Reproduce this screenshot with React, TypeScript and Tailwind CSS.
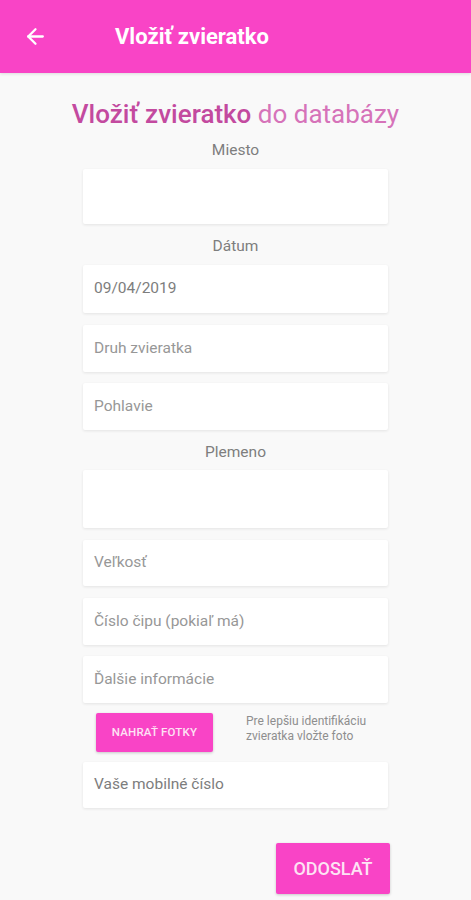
import { ArrowLeft } from "lucide-react";

// Simple white field box with optional placeholder text
function Field({ text, h, mt, dark }: { text?: string; h: string; mt: string; dark?: boolean }) {
  return (
    <div
      className={`${h} ${mt} w-full bg-white rounded-[2px] shadow-[0_1px_3px_rgba(0,0,0,0.09)] flex items-center px-[11px] text-[15.5px] ${
        dark ? "text-[#7d7d7d]" : "text-[#979797]"
      }`}
    >
      {text}
    </div>
  );
}

function Label({ text, mt }: { text: string; mt: string }) {
  return <div className={`${mt} text-center text-[15.5px] leading-[20px] text-[#7e7e7e]`}>{text}</div>;
}

export default function App() {
  return (
    <div className="w-[471px] h-[900px] bg-[#f9f9f9] overflow-hidden" style={{ fontFamily: "Roboto, 'Noto Sans', sans-serif" }}>
      {/* HEADER */}
      <div className="h-[73px] bg-[#f944c6] flex items-center shadow-[0_1px_3px_rgba(0,0,0,0.12)]">
        <ArrowLeft className="ml-[23px] w-[25px] h-[25px] text-white" strokeWidth={2.2} />
        <div className="ml-[67px] text-white text-[22px] font-bold">Vložiť zvieratko</div>
      </div>

      {/* FORM */}
      <div className="w-[305px] mx-auto">
        <div className="mt-[26px] text-center text-[26px] leading-[30px] whitespace-nowrap -mx-[30px]">
          <span className="text-[#c34a9f] font-medium">Vložiť zvieratko</span>{" "}
          <span className="text-[#d673b9]">do databázy</span>
        </div>

        <Label text="Miesto" mt="mt-[11px]" />
        <Field h="h-[55px]" mt="mt-[9px]" />
        <Label text="Dátum" mt="mt-[12px]" />
        <Field text="09/04/2019" h="h-[48px]" mt="mt-[9px]" dark />
        <Field text="Druh zvieratka" h="h-[47px]" mt="mt-[12px]" />
        <Field text="Pohlavie" h="h-[47px]" mt="mt-[11px]" />
        <Label text="Plemeno" mt="mt-[12px]" />
        <Field h="h-[58px]" mt="mt-[8px]" />
        <Field text="Veľkosť" h="h-[46px]" mt="mt-[12px]" />
        <Field text="Číslo čipu (pokiaľ má)" h="h-[47px]" mt="mt-[12px]" />
        <Field text="Ďalšie informácie" h="h-[47px]" mt="mt-[11px]" />

        <div className="mt-[10px] flex items-start">
          <button className="ml-[13px] w-[117px] h-[39px] bg-[#f944c6] rounded-[2px] shadow-[0_1px_3px_rgba(0,0,0,0.2)] text-[11.5px] font-medium text-[#fde3f4] tracking-[0.2px]">
            NAHRAŤ FOTKY
          </button>
          <div className="ml-[33px] mt-[1px] text-[12px] leading-[15px] text-[#8e8e8e]">
            Pre lepšiu identifikáciu
            <br />
            zvieratka vložte foto
          </div>
        </div>

        <Field text="Vaše mobilné číslo" h="h-[46px]" mt="mt-[10px]" dark />

        <div className="mt-[35px] flex justify-end -mr-[2px]">
          <button className="w-[114px] h-[51px] bg-[#f944c6] rounded-[2px] shadow-[0_1px_3px_rgba(0,0,0,0.2)] text-[18px] font-medium text-[#fde3f4]">
            ODOSLAŤ
          </button>
        </div>
      </div>
    </div>
  );
}
